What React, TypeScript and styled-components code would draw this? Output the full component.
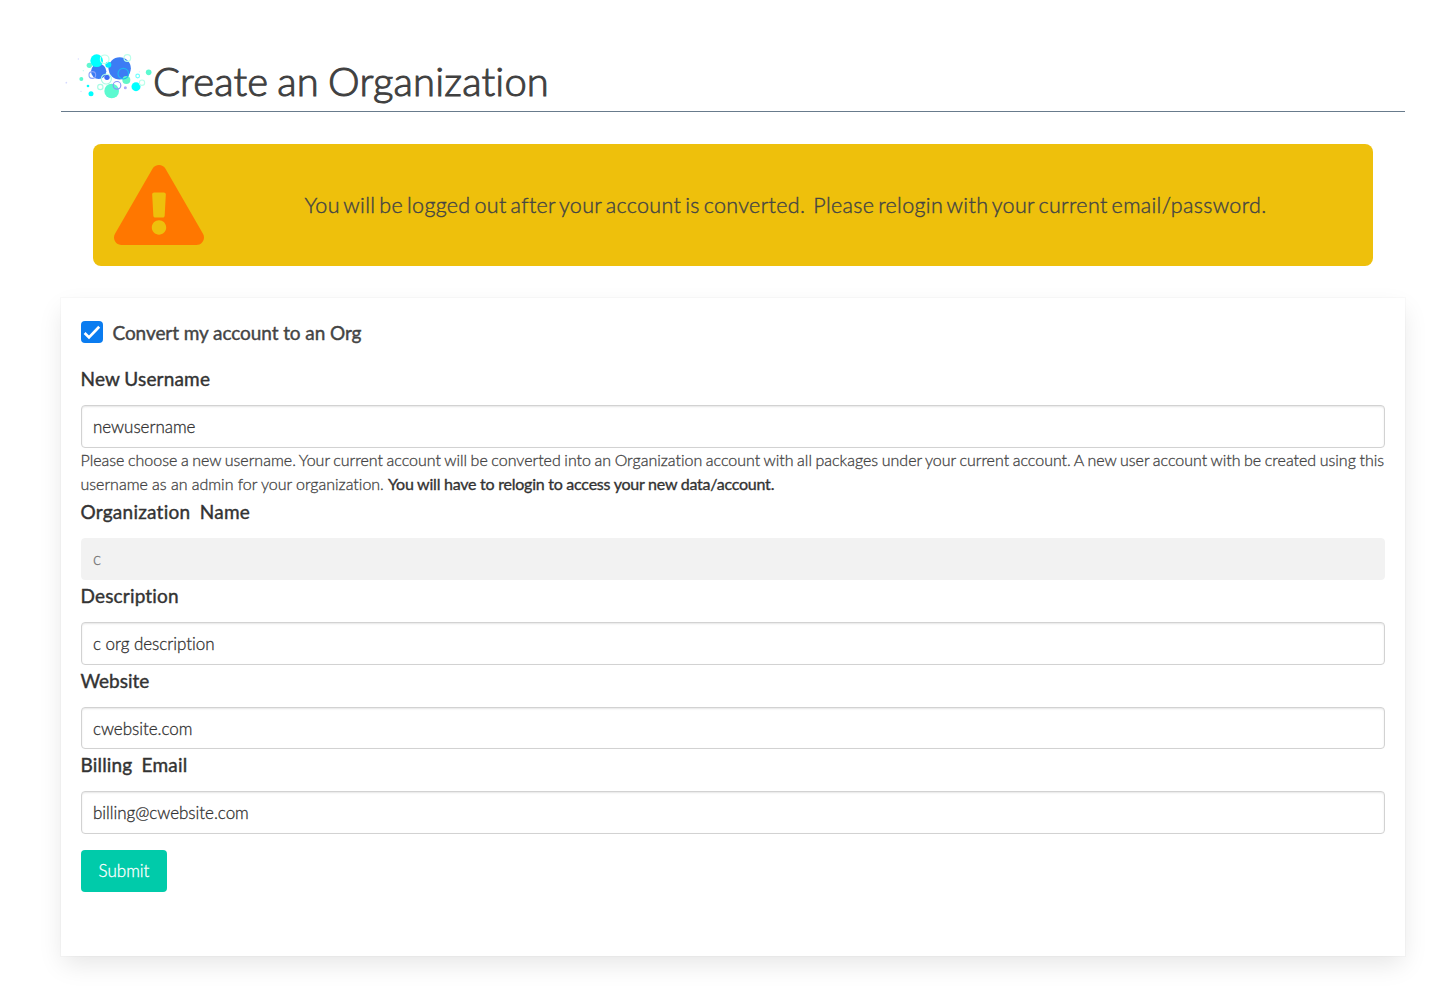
import React, { useState } from "react";
import styled, { createGlobalStyle } from "styled-components";
import { FaExclamationTriangle } from "react-icons/fa";

const GlobalStyle = createGlobalStyle`
  *, *::before, *::after { box-sizing: border-box; }
  body {
    margin: 0;
    background: #fff;
    color: #444;
    font-family: Lato, "Open Sans", sans-serif;
    font-size: 16px;
    font-weight: 300;
    font-variant-ligatures: none;
    -webkit-text-stroke: 0.3px currentColor;
  }
`;

const Page = styled.main`
  padding: 48px 41px 47px 61px;
`;

const Header = styled.header`
  display: flex;
  align-items: flex-start;
  height: 64px;
  border-bottom: 1px solid #687b8c;
`;

const Logo = styled.svg`
  flex: none;
  width: 92px;
  height: 56px;
`;

const Title = styled.h1`
  margin: 9px 0 0;
  color: #404040;
  font-size: 40px;
  line-height: 48px;
  font-weight: 300;
  letter-spacing: 0.16px;
  word-spacing: -2px;
  -webkit-text-stroke: 1px currentColor;
`;

const Alert = styled.section`
  display: flex;
  align-items: center;
  height: 122px;
  margin: 32px;
  padding: 0 21px;
  border-radius: 8px;
  background: #eec00c;
`;

const AlertIcon = styled(FaExclamationTriangle)`
  flex: none;
  width: 90px;
  height: 80px;
  color: #ff7700;
`;

const AlertText = styled.p`
  flex: 1;
  margin: 0 0 1px 15px;
  text-align: center;
  white-space: pre;
  font-size: 21.5px;
  line-height: 32px;
  letter-spacing: 0.33px;
  word-spacing: -2.2px;
  -webkit-text-stroke: 0.4px currentColor;
`;

const Card = styled.form`
  height: 658px;
  padding: 20px;
  background: #fff;
  box-shadow: 0 10px 24px -2px rgba(10, 10, 10, 0.1), 0 0 0 1px rgba(10, 10, 10, 0.02);
`;

const CheckRow = styled.label`
  display: flex;
  align-items: center;
  gap: 9.5px;
  height: 45px;
  padding-bottom: 17px;
  font-size: 19px;
  font-weight: 400;
  letter-spacing: -0.08px;
  -webkit-text-stroke: 0.4px currentColor;
`;

const Checkbox = styled.input`
  appearance: none;
  width: 22px;
  height: 22px;
  margin: 0;
  border-radius: 4px;
  background: #0a7cf0;
`;

const CheckWrap = styled.span`
  position: relative;
  display: flex;
`;

const CheckMark = styled.svg`
  position: absolute;
  inset: 0;
  pointer-events: none;
`;

const CheckLabel = styled.span`
  margin-top: 1px;
`;

const Label = styled.label<{ $spacing?: number }>`
  display: block;
  height: 42px;
  margin-left: -0.5px;
  color: #333;
  font-size: 19px;
  font-weight: 400;
  line-height: 32px;
  letter-spacing: ${(p) => p.$spacing ?? 0.17}px;
  word-spacing: -0.4px;
  white-space: pre;
  -webkit-text-stroke: 0.4px currentColor;
`;

const Input = styled.input`
  display: block;
  width: 100%;
  height: 42.5px;
  padding: 1px 11px 0;
  border: 1px solid #d2d2d2;
  border-radius: 4px;
  background: #fff;
  box-shadow: inset 0 1px 2px rgba(10, 10, 10, 0.1);
  color: #333;
  font: inherit;
  font-size: 17px;
  letter-spacing: -0.03px;
  outline: none;
  &:disabled {
    border-color: #f2f2f2;
    background: #f2f2f2;
    box-shadow: none;
    color: #777;
    padding-top: 0;
  }
`;

const Help = styled.p`
  height: 48px;
  margin: 0 -4px 0 -0.5px;
  line-height: 24px;
  word-spacing: -0.78px;
`;

const HelpTail = styled.span`
  word-spacing: -0.1px;
`;

const Strong = styled.strong`
  color: #333;
  font-weight: 400;
  letter-spacing: -0.22px;
  -webkit-text-stroke: 0.35px currentColor;
`;

const Submit = styled.button`
  display: block;
  width: 86px;
  height: 42px;
  margin-top: 16.4px;
  padding: 0;
  border: 0;
  border-radius: 4px;
  background: #00cbaa;
  color: #fff;
  font: inherit;
  font-size: 17px;
`;

const dots: [number, number, number, string][] = [
  [100, 64, 8, "#62f7d0"],
  [128, 82, 23, "#3c7cf4"],
  [122, 50, 19, "#00ffff"],
  [191, 73, 33.5, "#3c7cf4"],
  [157, 62, 9, "#00f0ff"],
  [153, 100, 8, "#3c6cf4"],
  [211, 108, 12, "#62f7c8"],
  [167, 141, 22, "#5cfad0"],
  [240, 128, 13.5, "#00ffff"],
  [278, 85, 8.5, "#5cfad0"],
  [76, 105, 6, "#5cfad0"],
  [96, 126, 4, "#00ffff"],
  [105, 149, 7.5, "#00ffff"],
  [208, 131, 4.5, "#a9a9fa"],
  [31, 116, 2.5, "#d5d8ff"],
  [67, 45, 2, "#d5d8ff"],
  [75, 142, 2, "#d5d8ff"],
  [82, 80, 2, "#bffbec"],
  [250, 83, 1.5, "#d5d8ff"],
];

const rings: [number, number, number, string][] = [
  [146, 46, 13, "#baffea"],
  [214, 42, 10, "#baffea"],
  [109, 93, 10, "#8ba4fa"],
  [151, 105, 15, "#a8fce4"],
  [202, 89, 16, "#1fb6f2"],
  [183, 124, 11.5, "#8a94f8"],
  [133, 129, 8, "#a8fce4"],
  [245, 96, 5.5, "#70ffff"],
  [258, 116, 8, "#baffea"],
];

const fields = [
  { id: "org", label: "Organization  Name", value: "c", disabled: true, spacing: 0.25 },
  { id: "description", label: "Description", value: "c org description" },
  { id: "website", label: "Website", value: "cwebsite.com", spacing: -0.02 },
  { id: "billing", label: "Billing  Email", value: "billing@cwebsite.com" },
];

export default function App() {
  const [checked, setChecked] = useState(true);
  return (
    <Page>
      <GlobalStyle />
      <Header>
        <Logo viewBox="15 12 276 168" aria-hidden="true">
          {dots.map(([x, y, r, c]) => (
            <circle key={`${x}-${y}`} cx={x} cy={y} r={r} fill={c} />
          ))}
          {rings.map(([x, y, r, c]) => (
            <circle key={`${x}-${y}`} cx={x} cy={y} r={r} fill="none" stroke={c} strokeWidth={3.4} />
          ))}
        </Logo>
        <Title>Create an Organization</Title>
      </Header>
      <Alert>
        <AlertIcon />
        <AlertText>
          {"You will be logged out after your account is converted.  Please relogin with your current email/password."}
        </AlertText>
      </Alert>
      <Card onSubmit={(e) => e.preventDefault()}>
        <CheckRow>
          <CheckWrap>
            <Checkbox type="checkbox" checked={checked} onChange={() => setChecked(!checked)} />
            {checked && (
              <CheckMark width="22" height="22" viewBox="0 0 22 22">
                <path d="M3.6 12 8 16.4 18.2 5.8" fill="none" stroke="#fff" strokeWidth="2.7" />
              </CheckMark>
            )}
          </CheckWrap>
          <CheckLabel>Convert my account to an Org</CheckLabel>
        </CheckRow>
        <Label htmlFor="username">New Username</Label>
        <Input id="username" defaultValue="newusername" />
        <Help>
          Please choose a new username. Your current account will be converted into an Organization account with all
          packages under your current account. A new user account with be created using this{" "}
          <HelpTail>
            username as an admin for your organization.{" "}
            <Strong>You will have to relogin to access your new data/account.</Strong>
          </HelpTail>
        </Help>
        {fields.map((f) => (
          <React.Fragment key={f.id}>
            <Label htmlFor={f.id} $spacing={f.spacing}>{f.label}</Label>
            <Input id={f.id} defaultValue={f.value} disabled={f.disabled} />
          </React.Fragment>
        ))}
        <Submit type="submit">Submit</Submit>
      </Card>
    </Page>
  );
}
